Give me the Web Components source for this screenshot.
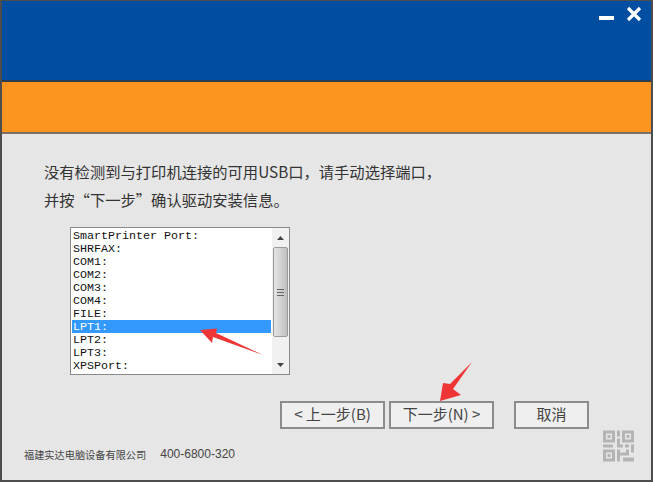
<!DOCTYPE html>
<html lang="zh"><head><meta charset="utf-8">
<style>html,body{margin:0;padding:0;background:#e6e6e6}body{width:653px;height:482px;overflow:hidden}</style>
</head><body>
<template id="t-list"><style>
:host{display:flex;box-sizing:border-box;width:220px;height:148px;border:1px solid #8a8a8a;background:#fff;font:11.67px/15px "Liberation Mono",monospace;color:#111}
.items{flex:1;padding:1px 1px 0 1px;min-width:0}
.track{width:17px;background:#f1f1f1;display:flex;flex-direction:column;align-items:center}
.btn{height:18px;display:flex;align-items:center;justify-content:center;flex:none}
.btn.top{height:19px}
.thumb{box-sizing:border-box;width:15px;height:90px;border:1px solid #9a9a9a;border-radius:2px;background:linear-gradient(90deg,#e4e4e4,#d2d2d2 50%,#bfbfbf);display:flex;align-items:center;justify-content:center}
.space{flex:1}
</style><div class="items"><slot></slot></div><div class="track"><div class="btn top"><svg width="7" height="4"><path d="M3.500 0 7 4H0z" fill="#444"/></svg></div><div class="thumb"><svg width="7" height="7"><path d="M0 .5h7M0 3.500h7M0 6.500h7" stroke="#666"/></svg></div><div class="space"></div><div class="btn"><svg width="7" height="4"><path d="M0 0h7L3.500 4z" fill="#444"/></svg></div></div></template>
<template id="t-item"><style>
:host{display:block;height:13px;padding-left:1px;white-space:pre}
:host([selected]){background:#3399ff;color:#fff}
</style><slot></slot></template>
<template id="t-btn"><style>
:host{display:flex;align-items:center;justify-content:center;box-sizing:border-box;height:28px;padding-bottom:3px;border:2px solid #8c8c8c;background:#efefef;color:#444;font:15px "Noto Sans CJK SC","Liberation Sans",sans-serif;white-space:pre}
</style><slot></slot></template>
<template id="t-app"><style>
:host{display:flex;flex-direction:column;box-sizing:border-box;position:relative;width:653px;height:482px;border:solid #4d4d4d;border-width:1px 2px 2px 2px;background:#e6e6e6;font-family:"Noto Sans CJK SC","Liberation Sans",sans-serif;color:#333}
.head{height:81px;flex:none;background:#004ea2;border-bottom:2px solid #2b3b52;display:flex;justify-content:flex-end;padding:5px 9px 0 0;box-sizing:border-box}
.win{display:flex;gap:12px;align-items:flex-start}
.band{height:52px;flex:none;background:#fc951f;border-bottom:2px solid #7d7262;box-sizing:border-box}
.body{flex:1;display:flex;flex-direction:column;padding:23px 0 0 42px;min-height:0}
.msg{font-size:15.300px;line-height:28px;height:56px}
.msg div{white-space:pre}
.list{margin:14px 0 0 26px}
.btns{display:flex;margin:26px 0 0 236px}
.foot{display:flex;align-items:center;margin:9px 0 0 -20px;font-size:10.200px;color:#444;height:32px}
.tel{margin-left:14px;font:12px "Liberation Sans",sans-serif}
.qr{margin-left:auto;margin-right:17px;align-self:flex-start;margin-top:-8px;filter:blur(.6px)}
.arrow{position:absolute;pointer-events:none}
</style>
<div class="head"><div class="win"><svg width="15" height="16" viewBox="0 0 15 16"><rect y="10" width="15" height="4" fill="#fff"/></svg><svg width="16" height="16" viewBox="0 0 16 16"><path d="M2 2l12 12M14 2L2 14" stroke="#fff" stroke-width="3.200"/></svg></div></div>
<div class="band"></div>
<div class="body">
<div class="msg"><div>没有检测到与打印机连接的可用USB口，请手动选择端口，</div><div>并按“下一步”确认驱动安装信息。</div></div>
<div class="list"><slot name="list"></slot></div>
<div class="btns"><slot name="buttons"></slot></div>
<div class="foot"><span>福建实达电脑设备有限公司</span><span class="tel">400-6800-320</span>
<svg class="qr" width="31" height="32" viewBox="0 0 31 31" fill="#b4b4b4"><path fill-rule="evenodd" d="M0 0h12v12H0zM3 3v6h6V3zM19 0h12v12H19zM22 3v6h6V3zM0 19h12v12H0zM3 22v6h6v-6z"/><path d="M4.500 4.500h3v3h-3zM23.500 4.500h3v3h-3zM4.500 23.500h3v3h-3zM14 0h3v6h-3zM14 8h3v6h3v3h-6zM0 14h10v3H0zM22 14h4v3h-4zM28 14h3v8h-3zM14 19h3v3h6v-3h3v6h-9v6h-3zM20 27h11v4H20z"/></svg></div>
</div>
<svg class="arrow" style="left:196px;top:324px" width="72" height="36" viewBox="0 0 72 36"><path d="M2 5 L19 3.500 L18 8 L65 30 L15 12 L14 18 Z" fill="#ee3636"/></svg>
<svg class="arrow" style="left:436px;top:360px" width="38" height="44" viewBox="0 0 38 44"><path d="M34 1 L15 28 L23 34 L2 40 L5 22 L12 23 Z" fill="#ee3636"/></svg>
</template>
<script>
function def(tag,id){customElements.define(tag,class extends HTMLElement{constructor(){super();this.attachShadow({mode:"open"}).appendChild(document.getElementById(id).content.cloneNode(true));}});}
def("port-list","t-list");def("port-item","t-item");def("wiz-button","t-btn");def("wizard-app","t-app");
</script>
<wizard-app>
<port-list slot="list"><port-item>SmartPrinter Port:</port-item><port-item>SHRFAX:</port-item><port-item>COM1:</port-item><port-item>COM2:</port-item><port-item>COM3:</port-item><port-item>COM4:</port-item><port-item>FILE:</port-item><port-item selected>LPT1:</port-item><port-item>LPT2:</port-item><port-item>LPT3:</port-item><port-item>XPSPort:</port-item></port-list>
<wiz-button slot="buttons" style="width:105px">&lt; 上一步(B)</wiz-button>
<wiz-button slot="buttons" style="width:105px;margin-left:4px">下一步(N) &gt;</wiz-button>
<wiz-button slot="buttons" style="width:75px;margin-left:20px">取消</wiz-button>
</wizard-app>
</body></html>
